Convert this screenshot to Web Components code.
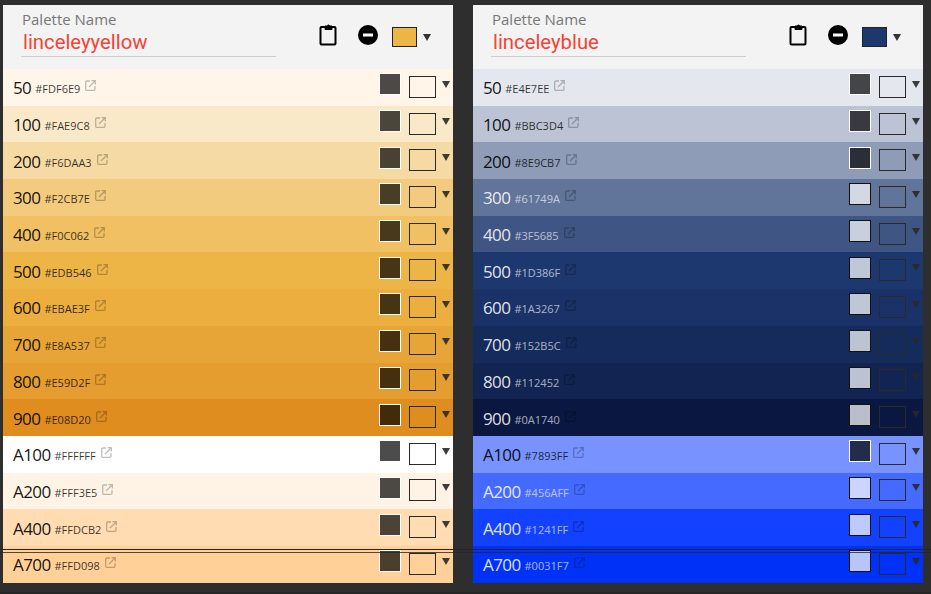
<!DOCTYPE html>
<html><head><meta charset="utf-8"><style>
html,body{margin:0;height:100%;overflow:hidden;background:#2e2e2e}
body{font-family:"Open Sans","Noto Sans",sans-serif}
</style></head><body>
<palette-board></palette-board>
<script>
const ICON_EXT='<svg width="11" height="11" viewBox="0 0 11 11" fill="none" stroke="currentColor" stroke-width="1.3"><path d="M5 1H1.700a1 1 0 0 0-1 1v7.300a1 1 0 0 0 1 1H9a1 1 0 0 0 1-1V6"/><path d="M4 7l6-6M6.500 .7h3.800v3.800"/></svg>';
class PaletteRow extends HTMLElement{
  connectedCallback(){
    const d=this.dataset, fg=d.fg||'dark';
    const labelC=fg==='dark'?'rgba(0,0,0,.92)':'rgba(255,255,255,.87)';
    const hexC=fg==='dark'?'rgba(0,0,0,.78)':'rgba(255,255,255,.65)';
    const swBg=fg==='dark'?'rgba(0,0,0,.7)':'rgba(255,255,255,.72)';
    const swBd=fg==='dark'?'#fff':'#111';
    this.attachShadow({mode:'open'}).innerHTML=`<style>
    :host{display:flex;align-items:center;height:36.7px;background:${d.c};padding-left:10px;box-sizing:border-box;position:relative}
    .l{font-size:17px;letter-spacing:-.6px;color:${labelC};line-height:22px;position:relative;top:1px}
    .h{font-size:11px;color:${hexC};margin-left:4px;position:relative;top:2px;line-height:14px}
    .e{color:rgba(0,0,0,.25);margin-left:5px;display:flex;margin-top:-3px}
    .sp{flex:1}
    .s{width:22px;height:22px;box-sizing:border-box;border:1px solid ${swBd};background:${swBg};margin-top:-6px}
    .b{width:27px;height:22px;box-sizing:border-box;border:1px solid #2a2a2a;background:${d.c};margin-left:8px;margin-top:-1px}
    .a{width:0;height:0;border:4px solid transparent;border-top:7px solid rgba(40,40,40,.9);border-bottom:0;margin:-6px 3px 0 6px}
    </style><span class="l">${d.n}</span><span class="h">#${d.hex}</span><span class="e">${ICON_EXT}</span><span class="sp"></span><span class="s"></span><span class="b"></span><span class="a"></span>`;
  }
}
class PaletteHeader extends HTMLElement{
  connectedCallback(){
    const d=this.dataset;
    this.attachShadow({mode:'open'}).innerHTML=`<style>
    :host{display:flex;height:64px;background:#f3f3f3;box-sizing:border-box;padding-left:18px;align-items:flex-start}
    .f{width:254px;height:51px;border-bottom:1px solid #ccc;padding-left:1px}
    .t{font-size:15px;line-height:18px;color:#777;padding-top:5px}
    .v{font-family:Roboto,sans-serif;font-size:20.3px;line-height:24px;color:#f44336;padding-left:1px;margin-top:2px}
    svg{display:block}
    .c{margin:18px 0 0 43px}
    .m{margin:20px 0 0 20px}
    .s{width:23px;height:18px;border:1px solid #222;background:${d.c};margin:22px 0 0 14px}
    .a{width:0;height:0;border:4px solid transparent;border-top:7px solid rgba(30,30,30,.9);border-bottom:0;margin:29px 0 0 6px}
    </style><div class="f"><div class="t">Palette Name</div><div class="v">${d.name}</div></div>
    <svg class="c" width="19" height="23" viewBox="0 0 19 23" fill="none" stroke="#000" stroke-width="2"><path d="M6 4H2.500a1 1 0 0 0-1 1V20.500a1 1 0 0 0 1 1h13a1 1 0 0 0 1-1V5a1 1 0 0 0-1-1H13"/><path d="M6 3h2.500a1 1 0 0 1 2 0H13V6.500H6z" fill="#000" stroke-width="1"/></svg>
    <svg class="m" width="20" height="20" viewBox="0 0 20 20"><circle cx="10" cy="10" r="10"/><rect x="5" y="8.500" width="10" height="3" fill="#fff"/></svg>
    <span class="s"></span><span class="a"></span>`;
  }
}
class PalettePanel extends HTMLElement{
  connectedCallback(){
    this.attachShadow({mode:'open'}).innerHTML=`<style>:host{display:block;width:450px}</style><slot></slot>`;
  }
}
class PaletteBoard extends HTMLElement{
  connectedCallback(){
    const Y=[['50','FDF6E9','#fff6e9'],['100','FAE9C8','#fae9c8'],['200','F6DAA3','#f6daa3'],['300','F2CB7E','#f2cb7e'],['400','F0C062','#f0c062'],['500','EDB546','#edb546'],['600','EBAE3F','#ebae3f'],['700','E8A537','#e8a537'],['800','E59D2F','#e59d2f'],['900','E08D20','#e08d20'],['A100','FFFFFF','#ffffff'],['A200','FFF3E5','#fff3e5'],['A400','FFDCB2','#ffdcb2'],['A700','FFD098','#ffd098']];
    const B=[['50','E4E7EE','#e4e7ee','dark'],['100','BBC3D4','#bbc3d4','dark'],['200','8E9CB7','#8e9cb7','dark'],['300','61749A','#61749a','light'],['400','3F5685','#3f5685','light'],['500','1D386F','#1d386f','light'],['600','1A3267','#1a3267','light'],['700','152B5C','#152b5c','light'],['800','112452','#112452','light'],['900','0A1740','#0a1740','light'],['A100','7893FF','#7893ff','dark'],['A200','456AFF','#456aff','light'],['A400','1241FF','#1241ff','light'],['A700','0031F7','#0031f7','light']];
    const panel=(name,c,rows)=>`<palette-panel><palette-header data-name="${name}" data-c="${c}"></palette-header>${rows.map(r=>`<palette-row data-n="${r[0]}" data-hex="${r[1]}" data-c="${r[2]}" data-fg="${r[3]||'dark'}"></palette-row>`).join('')}</palette-panel>`;
    this.attachShadow({mode:'open'}).innerHTML=`<style>
    :host{display:flex;gap:20px;padding:5px 3px 0;position:relative;height:594px;box-sizing:border-box}
    .ln{position:absolute;left:0;right:0;height:1px;background:#262626}
    .foot{position:absolute;left:0;right:0;bottom:0;height:2px;background:#262626}
    </style>${panel('linceleyyellow','#edb546',Y)}${panel('linceleyblue','#1d386f',B)}
    <div class="ln" style="top:549px"></div><div class="ln" style="top:552px;opacity:.8"></div><div class="foot"></div>`;
  }
}
customElements.define('palette-row',PaletteRow);
customElements.define('palette-header',PaletteHeader);
customElements.define('palette-panel',PalettePanel);
customElements.define('palette-board',PaletteBoard);
</script></body></html>
